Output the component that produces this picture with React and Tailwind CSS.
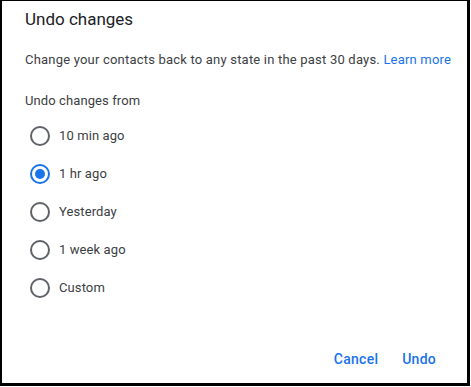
import React, { useState } from "react";

const options = ["10 min ago", "1 hr ago", "Yesterday", "1 week ago", "Custom"];

const Radio = ({ checked }) => (
  <span
    className={`flex h-5 w-5 items-center justify-center rounded-full border-2 ${
      checked ? "border-[#1a73e8]" : "border-[#5f6368]"
    }`}
  >
    {checked && <span className="h-2.5 w-2.5 rounded-full bg-[#1a73e8]" />}
  </span>
);

const App = () => {
  const [selected, setSelected] = useState("1 hr ago");

  return (
    <div
      className="flex h-[386px] w-[470px] flex-col border-t border-l-2 border-r-[3px] border-b-[3px] border-black bg-white pl-[23px]"
      style={{ fontFamily: "Roboto, 'Noto Sans', sans-serif" }}
    >
      <h1 className="mt-[6px] text-[17px] leading-6 text-[#202124]">Undo changes</h1>

      <p className="mt-[19px] text-[13px] leading-5 tracking-[0.2px] text-[#3c4043]">
        Change your contacts back to any state in the past 30 days.{" "}
        <a className="cursor-pointer text-[#1a73e8]">Learn more</a>
      </p>

      <p className="mt-[21px] text-[13px] leading-5 tracking-[0.1px] text-[#3c4043]">Undo changes from</p>

      {/* radio list */}
      <div className="mt-[6px] flex flex-col">
        {options.map((opt) => (
          <label
            key={opt}
            onClick={() => setSelected(opt)}
            className="flex h-[38px] cursor-pointer items-center gap-[9px] pl-[5px] text-[13px] tracking-[0.1px] text-[#3c4043]"
          >
            <Radio checked={selected === opt} />
            <span>{opt}</span>
          </label>
        ))}
      </div>

      <div className="mt-auto mb-[6px] flex justify-end gap-2 pr-[23px]">
        <button className="h-9 rounded px-2 text-sm font-medium tracking-[0.25px] text-[#1a73e8]">Cancel</button>
        <button className="h-9 rounded px-2 text-sm font-medium tracking-[0.25px] text-[#1a73e8]">Undo</button>
      </div>
    </div>
  );
};

export default App;
